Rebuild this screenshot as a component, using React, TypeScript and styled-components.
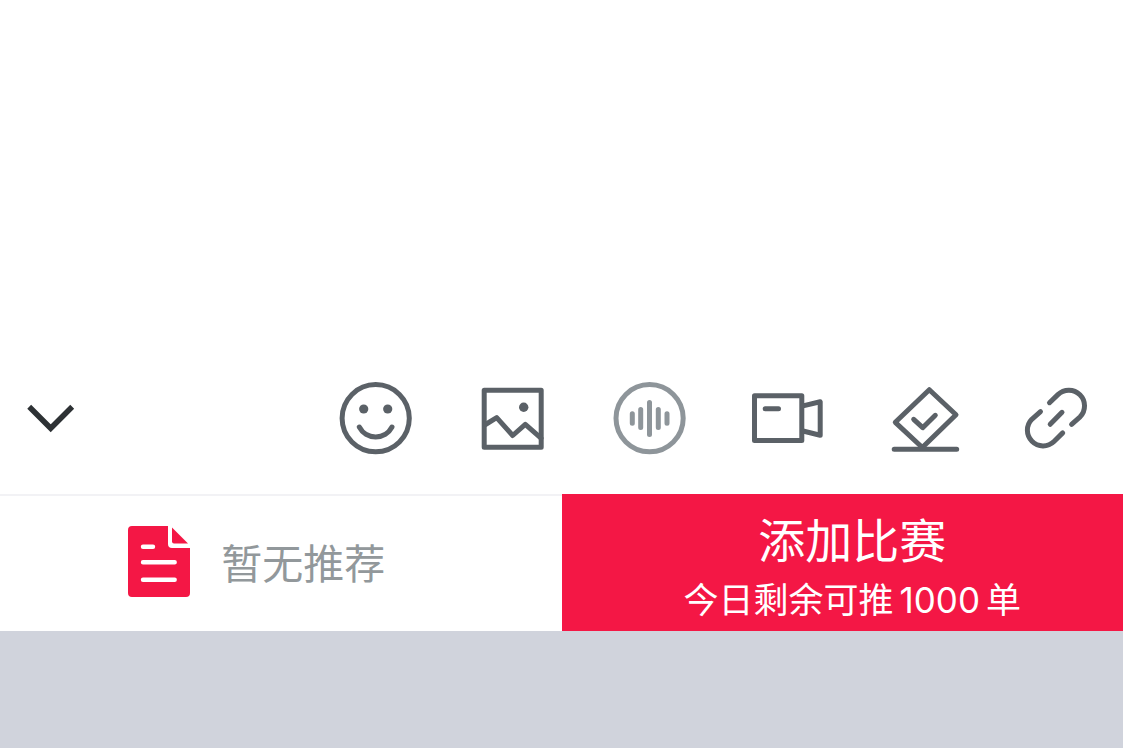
import React from "react";
import styled, { createGlobalStyle } from "styled-components";

const GlobalStyle = createGlobalStyle`
  *, *::before, *::after { box-sizing: border-box; }
  body {
    margin: 0;
    background: #ffffff;
    font-family: Inter, "Noto Sans CJK SC", sans-serif;
  }
  button {
    margin: 0;
    padding: 0;
    border: 0;
    background: none;
    font: inherit;
    cursor: pointer;
  }
`;

const Page = styled.div`
  display: flex;
  flex-direction: column;
  min-height: 100vh;
`;

const Editor = styled.textarea`
  flex: 1;
  width: 100%;
  padding: 24px;
  border: 0;
  outline: 0;
  resize: none;
  background: #ffffff;
  color: #2d3134;
  font: inherit;
  font-size: 40px;
`;

const Toolbar = styled.div`
  display: flex;
  align-items: center;
  justify-content: space-between;
  height: 152px;
  padding: 0 24px 0 13px;
`;

const Tools = styled.div`
  display: flex;
  gap: 61px;
`;

const IconButton = styled.button<{ $color?: string }>`
  width: 76px;
  height: 76px;
  color: ${({ $color }) => $color ?? "#5b6167"};

  svg {
    display: block;
    fill: none;
    stroke: currentColor;
    stroke-width: 5;
    stroke-linecap: round;
    stroke-linejoin: round;
  }

  .dot {
    fill: currentColor;
    stroke: none;
  }
`;

const ActionBar = styled.div`
  display: grid;
  grid-template-columns: 1fr 1fr;
  height: 137px;
`;

const Recommendation = styled.div`
  display: flex;
  align-items: center;
  justify-content: center;
  gap: 31px;
  padding-right: 48px;
  border-top: 2px solid #f2f2f5;
  color: #92989b;
  font-size: 41px;
  font-weight: 400;
  line-height: 60px;

  svg {
    margin-bottom: 5px;
  }
`;

const AddMatchButton = styled.button`
  && {
    display: flex;
    flex-direction: column;
    align-items: center;
    padding: 16px 0 0 20px;
    background: #f41745;
    color: #ffffff;
  }
`;

const AddTitle = styled.span`
  font-size: 47px;
  line-height: 62px;
`;

const AddQuota = styled.span`
  font-size: 35px;
  line-height: 56px;
`;

const QuotaCount = styled.span`
  margin: 0 6px;
`;

const KeyboardArea = styled.div`
  height: 117px;
  background: #d0d3dc;
`;

type ToolProps = { label: string; color?: string; children: React.ReactNode };

function Tool({ label, color, children }: ToolProps) {
  return (
    <IconButton type="button" aria-label={label} $color={color}>
      <svg width="76" height="76" viewBox="0 0 76 76" aria-hidden="true">
        {children}
      </svg>
    </IconButton>
  );
}

function DocumentIcon() {
  return (
    <svg width="62" height="71" viewBox="0 0 62 71" aria-hidden="true">
      <path
        d="M4 0H40V18a4 4 0 0 0 4 4H62V67a4 4 0 0 1-4 4H4a4 4 0 0 1-4-4V4a4 4 0 0 1 4-4Z"
        fill="#f41745"
      />
      <path d="M44 1.5L60 17.5H46a2 2 0 0 1-2-2Z" fill="#f41745" />
      <path
        d="M15 20.7H25M15 36.3H46.7M15 53.8H46.7"
        stroke="#ffffff"
        strokeWidth="4.4"
        strokeLinecap="round"
      />
    </svg>
  );
}

export default function App() {
  return (
    <Page>
      <GlobalStyle />
      <Editor aria-label="正文" />
      <Toolbar>
        <Tool label="收起" color="#2d3134">
          <path
            d="M16.2 26.8L37.7 48.3L59.2 26.8"
            strokeWidth="5.5"
            style={{ strokeLinecap: "butt", strokeLinejoin: "miter" }}
          />
        </Tool>
        <Tools>
          <Tool label="表情">
            <circle cx="37.7" cy="38.2" r="33.6" />
            <circle className="dot" cx="25.7" cy="29" r="4.6" />
            <circle className="dot" cx="49.7" cy="29" r="4.6" />
            <path d="M21.3 47A18.4 18.4 0 0 0 54 47" />
          </Tool>
          <Tool label="图片">
            <rect x="9.2" y="10.2" width="57" height="57" />
            <circle className="dot" cx="48.7" cy="27.3" r="4.7" />
            <path d="M10.5 44.5L21.7 37.7L37.7 55.5L50.3 44.3L66 58.2" />
          </Tool>
          <Tool label="语音" color="#8e959a">
            <circle cx="37.6" cy="38.2" r="33.6" />
            <path d="M20.3 33.8V43.2M28.7 29.5V47.5M37.5 22.5V54.5M46.3 29.5V47.5M55 33.8V43.2" />
          </Tool>
          <Tool label="视频">
            <rect x="5.5" y="15.8" width="47.3" height="44.8" />
            <path d="M16.2 28.7H29.5M54 25.9L71.2 21.8V55.3L54 51" />
          </Tool>
          <Tool label="投票">
            <path d="M43.3 9.7L70 34.7L36.3 67.5L9.3 42.3Z" />
            <path d="M27.7 39.3L36.7 47.7L49.3 35.3M8.2 69.3H70.7" />
          </Tool>
          <Tool label="链接">
            <path d="M26.5 22.7L34.9 14.6A15.7 15.7 0 0 1 57.1 36.8L48.6 44.3" />
            <path d="M17.5 31.6L8.8 39.3A15.7 15.7 0 0 0 31 61.5L39.7 52.9" />
            <path d="M27.2 44.3L39 32.3" />
          </Tool>
        </Tools>
      </Toolbar>
      <ActionBar>
        <Recommendation>
          <DocumentIcon />
          <span>暂无推荐</span>
        </Recommendation>
        <AddMatchButton type="button">
          <AddTitle>添加比赛</AddTitle>
          <AddQuota>
            今日剩余可推<QuotaCount>1000</QuotaCount>单
          </AddQuota>
        </AddMatchButton>
      </ActionBar>
      <KeyboardArea />
    </Page>
  );
}
